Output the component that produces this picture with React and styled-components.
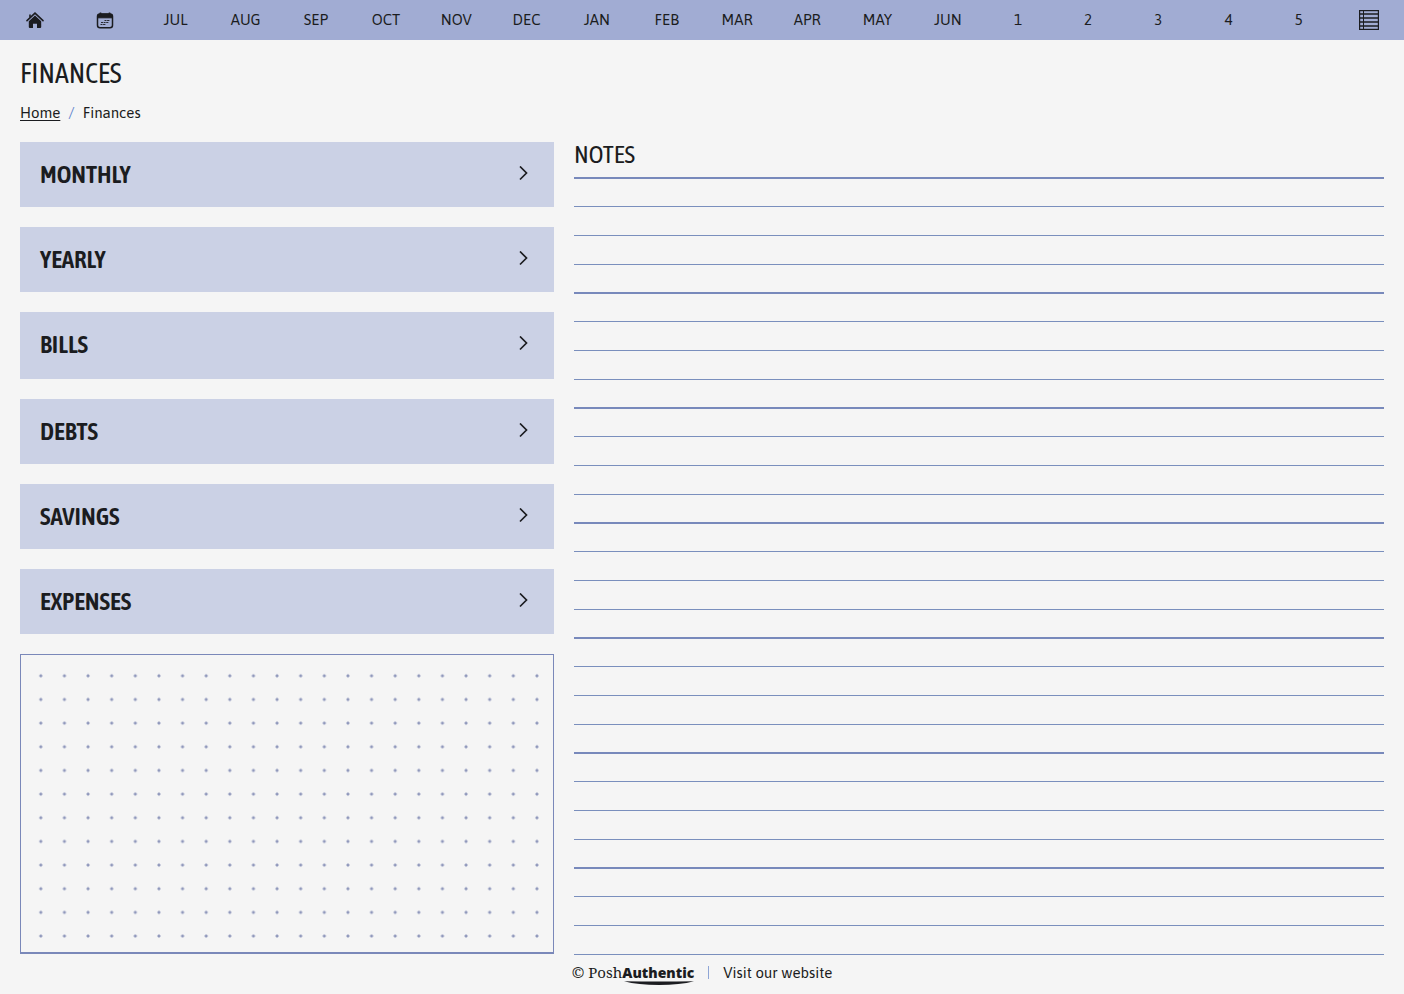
import { Fragment } from "react";
import styled, { createGlobalStyle } from "styled-components";

const GlobalStyle = createGlobalStyle`
  * {
    box-sizing: border-box;
  }

  body {
    margin: 0;
    background-color: #f5f5f5;
    color: #1b1c20;
    font-family: "Asap", "Noto Sans", sans-serif;
    font-size: 15px;
    line-height: 20px;
  }

  a {
    color: inherit;
    text-decoration: none;
  }
`;

const condensed = `"Asap Condensed", "Liberation Sans Narrow", sans-serif`;

const NavBar = styled.nav`
  display: grid;
  grid-template-columns: repeat(20, 1fr);
  height: 40px;
  background-color: #a1acd3;
`;

const NavLink = styled.a`
  display: flex;
  justify-content: center;
  align-items: center;
`;

const PageHeader = styled.header`
  padding: 16px 20px 19px;
`;

const Title = styled.h1`
  margin: 0 0 13px;
  font-family: ${condensed};
  font-size: 28px;
  font-weight: 400;
  line-height: 34px;
`;

const Breadcrumb = styled.div`
  display: flex;
  gap: 8px;
`;

const HomeLink = styled.a`
  && {
    text-decoration: underline;
    text-underline-offset: 2px;
  }
`;

const Slash = styled.span`
  color: #5f84cc;
`;

const Columns = styled.main`
  display: grid;
  grid-template-columns: 89fr 135fr;
  gap: 20px;
  padding: 0 20px;
`;

const Sections = styled.div`
  display: flex;
  flex-direction: column;
  gap: 20px;
  padding-bottom: 1px;
`;

const SectionLink = styled.a`
  display: flex;
  justify-content: space-between;
  align-items: center;
  height: ${(props) => (props.$tall ? "67px" : "65px")};
  padding: 0 24px ${(props) => (props.$tall ? "4px" : "2px")} 20px;
  background-color: #cbd1e5;
  font-family: ${condensed};
  font-size: 25px;
  font-weight: 600;
`;

const DotBox = styled.div`
  flex: 1;
  display: flex;
  padding: 9px 4px 4px 8px;
  border: 1px solid #7a88b9;
  border-bottom-width: 2px;
`;

const Dots = styled.div`
  flex: 1;
  background-image: radial-gradient(circle, #8f97bb 1px, transparent 2px);
  background-size: 24px 24px;
  background-repeat: round;
`;

const NotesTitle = styled.h2`
  margin: 0;
  height: 37px;
  border-bottom: 2px solid #7889bb;
  font-family: ${condensed};
  font-size: 25px;
  font-weight: 400;
  line-height: 24px;
`;

const NoteLine = styled.div`
  height: 29px;
  border-bottom: 1px solid #7a8fbd;

  &:nth-child(4n + 2) {
    height: 28px;
  }

  &:nth-child(4n + 1) {
    border-bottom: 2px solid #7889bb;
  }
`;

const Footer = styled.footer`
  display: flex;
  justify-content: center;
  align-items: center;
  gap: 14px;
  padding: 7px 0 10px;
`;

const Brand = styled.a`
  position: relative;
  font-family: "Noto Serif", "Liberation Serif", serif;
  font-size: 15px;
`;

const BrandStrong = styled.strong`
  font-family: "Noto Sans", sans-serif;
  font-size: 14px;
  font-weight: 900;
`;

const Divider = styled.span`
  width: 1px;
  height: 13px;
  background-color: #8fa6d6;
`;

const Swoosh = styled.svg`
  position: absolute;
  right: 0;
  bottom: -2px;
`;

function HomeIcon() {
  return (
    <svg width="18" height="17" viewBox="0 0 18 17" fill="none">
      <path d="M1 8.6 9 1.2l8 7.4" stroke="#1b1c20" strokeWidth="1.6" strokeLinecap="round" />
      <path d="M9 3.6 15.2 9.3V15a1 1 0 0 1-1 1H11v-4.2H7V16H3.8a1 1 0 0 1-1-1V9.3Z" fill="#1b1c20" />
      <path d="M4 2.5v3" stroke="#1b1c20" strokeWidth="1.6" />
    </svg>
  );
}

function CalendarIcon() {
  return (
    <svg width="18" height="17" viewBox="0 0 18 17" fill="none" stroke="#1b1c20">
      <rect x="1.5" y="2" width="15" height="13.8" rx="2.5" strokeWidth="1.5" />
      <path d="M1.5 5.8V4.5A2.5 2.5 0 0 1 4 2h10a2.5 2.5 0 0 1 2.5 2.5V5.8Z" fill="#1b1c20" />
      <path d="M4.5 .5v3M13.5 .5v3" strokeWidth="1.6" />
      <path d="M8.5 8.5H14M5 10.5h8M4.5 12.5H10" strokeWidth=".9" strokeDasharray="2 .6" />
    </svg>
  );
}

function TableIcon() {
  return (
    <svg width="20" height="20" viewBox="0 0 20 20" fill="none" stroke="#1b1c20">
      <rect x=".5" y=".5" width="19" height="19" strokeWidth="1.4" />
      <path d="M4.5 0v20" />
      <path d="M0 4h20M0 8h20M0 12h20M0 16h20" strokeWidth="1.4" />
    </svg>
  );
}

function ChevronIcon() {
  return (
    <svg width="12" height="16" viewBox="0 0 12 16" fill="none">
      <path d="m2 .5 6.500 6.500L2 13.500" stroke="#1b1c20" strokeWidth="1.7" />
    </svg>
  );
}

const months = ["JUL", "AUG", "SEP", "OCT", "NOV", "DEC", "JAN", "FEB", "MAR", "APR", "MAY", "JUN"];
const extras = ["1", "2", "3", "4", "5"];
const sections = ["MONTHLY", "YEARLY", "BILLS", "DEBTS", "SAVINGS", "EXPENSES"];
const noteLines = Array.from({ length: 27 }, (_, i) => i);

function App() {
  return (
    <Fragment>
      <GlobalStyle />
      <NavBar>
        <NavLink href="#home" aria-label="Home">
          <HomeIcon />
        </NavLink>
        <NavLink href="#calendar" aria-label="Calendar">
          <CalendarIcon />
        </NavLink>
        {[...months, ...extras].map((item) => (
          <NavLink key={item} href={`#${item}`}>
            {item}
          </NavLink>
        ))}
        <NavLink href="#index" aria-label="Index">
          <TableIcon />
        </NavLink>
      </NavBar>

      <PageHeader>
        <Title>FINANCES</Title>
        <Breadcrumb>
          <HomeLink href="#home">Home</HomeLink>
          <Slash>/</Slash>
          <span>Finances</span>
        </Breadcrumb>
      </PageHeader>

      <Columns>
        <Sections>
          {sections.map((name) => (
            <SectionLink key={name} href={`#${name}`} $tall={name === "BILLS"}>
              {name}
              <ChevronIcon />
            </SectionLink>
          ))}
          <DotBox>
            <Dots />
          </DotBox>
        </Sections>
        <section>
          <NotesTitle>NOTES</NotesTitle>
          {noteLines.map((i) => (
            <NoteLine key={i} />
          ))}
        </section>
      </Columns>

      <Footer>
        <Brand href="#brand">
          © Posh<BrandStrong>Authentic</BrandStrong>
          <Swoosh width="70" height="4" viewBox="0 0 70 4">
            <path d="M0 .2Q35 .8 70 .2Q56 4 35 4Q14 4 0 .2Z" fill="#1b1c20" />
          </Swoosh>
        </Brand>
        <Divider />
        <a href="#website">Visit our website</a>
      </Footer>
    </Fragment>
  );
}

export default App;
